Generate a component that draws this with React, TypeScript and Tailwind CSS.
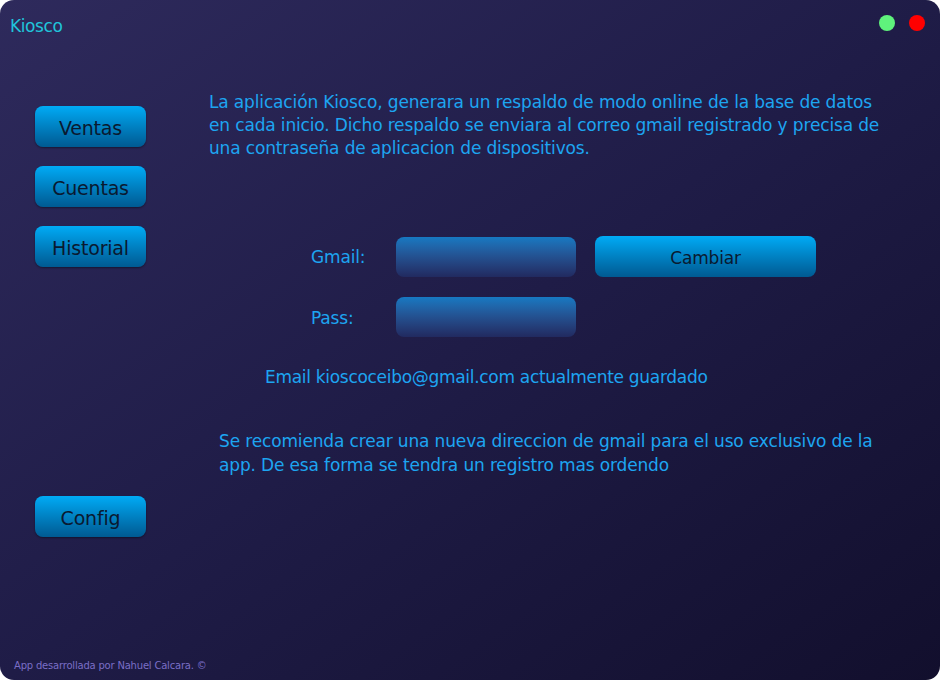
import React from "react";

const font = { fontFamily: '"DejaVu Sans", Verdana, sans-serif' };

function SideButton({ label }: { label: string }) {
  return (
    <button className="w-[111px] h-[41px] rounded-[8px] bg-gradient-to-b from-[#00abf6] to-[#005a92] text-[#0a1930] text-[19px] tracking-[-0.2px] pt-[3px] flex items-center justify-center shadow-[0_1px_2px_rgba(0,0,0,0.4)]">
      {label}
    </button>
  );
}

export default function App() {
  return (
    <div className="w-[940px] h-[680px] bg-white" style={font}>
      <div className="w-[940px] h-[680px] rounded-[14px] overflow-hidden bg-gradient-to-br from-[#2e2a5c] via-[#1f1c47] to-[#120f2d] flex flex-col relative">
        {/* header */}
        <div className="h-[50px] flex items-start justify-between">
          <div className="pl-[10px] pt-[15px] text-[17px] tracking-[-0.4px] text-[#20c4da] leading-[22px]">Kiosco</div>
          <div className="flex gap-[14px] pt-[15px] pr-[15px]">
            <div className="w-[16px] h-[16px] rounded-full bg-[#5ff27c]" />
            <div className="w-[16px] h-[16px] rounded-full bg-[#ff0000]" />
          </div>
        </div>
        {/* body */}
        <div className="flex flex-1">
          <div className="w-[209px] pl-[35px] pt-[56px] flex flex-col">
            <div className="flex flex-col gap-[19px]">
              <SideButton label="Ventas" />
              <SideButton label="Cuentas" />
              <SideButton label="Historial" />
            </div>
            <div className="mt-[229px]">
              <SideButton label="Config" />
            </div>
          </div>
          <div className="flex-1 flex flex-col text-[#1da5f1] text-[17px] tracking-[-0.15px]">
            <p className="mt-[41px] leading-[23px]">
              La aplicación Kiosco, generara un respaldo de modo online de la base de datos
              <br />
              en cada inicio. Dicho respaldo se enviara al correo gmail registrado y precisa de
              <br />
              una contraseña de aplicacion de dispositivos.
            </p>
            <div className="mt-[76px] ml-[102px] flex flex-col gap-[20px]">
              <div className="flex items-center">
                <span className="w-[85px] pt-[2px]">Gmail:</span>
                <div className="w-[180px] h-[40px] rounded-[8px] bg-gradient-to-b from-[#1679c2] to-[#212a60]" />
                <button className="ml-[19px] w-[221px] h-[41px] rounded-[8px] bg-gradient-to-b from-[#00abf6] to-[#005a92] text-[#0a1930] text-[17px] tracking-[-0.2px] pt-[4px] flex items-center justify-center">
                  Cambiar
                </button>
              </div>
              <div className="flex items-center">
                <span className="w-[85px] pt-[4px]">Pass:</span>
                <div className="w-[180px] h-[40px] rounded-[8px] bg-gradient-to-b from-[#1679c2] to-[#212a60]" />
              </div>
            </div>
            <p className="mt-[29px] ml-[56px] leading-[23px] tracking-[-0.3px]">
              Email kioscoceibo@gmail.com actualmente guardado
            </p>
            <p className="mt-[40px] ml-[10px] leading-[24px]">
              Se recomienda crear una nueva direccion de gmail para el uso exclusivo de la
              <br />
              app. De esa forma se tendra un registro mas ordendo
            </p>
          </div>
        </div>
        <div className="absolute left-[14px] bottom-[7px] text-[10px] tracking-[-0.2px] text-[#7a6ec6]">
          App desarrollada por Nahuel Calcara. ©
        </div>
      </div>
    </div>
  );
}
